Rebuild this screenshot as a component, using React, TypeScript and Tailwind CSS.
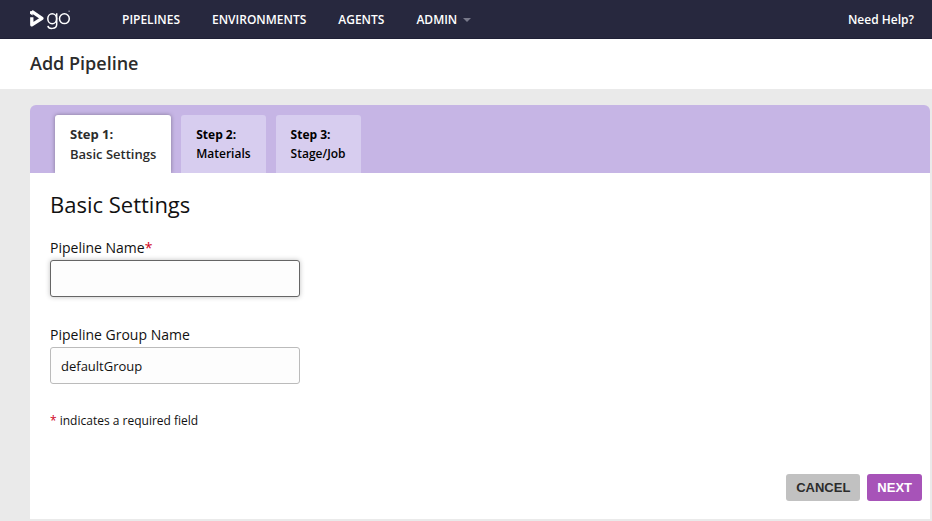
const navLinks = ['PIPELINES', 'ENVIRONMENTS', 'AGENTS'];

const steps = [
  { title: 'Step 1:', name: 'Basic Settings', active: true },
  { title: 'Step 2:', name: 'Materials', active: false },
  { title: 'Step 3:', name: 'Stage/Job', active: false },
];

function Logo() {
  return (
    <svg viewBox="0 0 42 22" className="h-[22px] w-[42px]" fill="none" aria-label="go" role="img">
      <path
        d="M1.7 2.3L12 9.3L1.8 15.8V8.2"
        stroke="#fff"
        strokeWidth="3.3"
        strokeLinejoin="round"
      />
      <path d="M0 2.2V4.8L2.6 6.4V2z" fill="#fff" />
      <g stroke="#fff" strokeWidth="1.5">
        <ellipse cx="22.2" cy="9.7" rx="4.4" ry="5" />
        <path d="M26.7 4.2V15.2C26.7 20.4 18.6 20.6 17.9 16.8" />
        <circle cx="34.4" cy="9.7" r="4.9" />
      </g>
      <path d="M38.4 2.2h1.5" stroke="#b5b5c0" />
    </svg>
  );
}

function Header() {
  return (
    <header className="flex h-[39px] items-center bg-[#27283e] pl-[30px] pr-[18px] text-xs font-semibold text-white shadow-[inset_0_-1px_0_#1f2036]">
      <a href="#home">
        <Logo />
      </a>
      <nav className="ml-[50px] flex flex-1 items-center gap-8">
        {navLinks.map((label) => (
          <a key={label} href={`#${label.toLowerCase()}`}>
            {label}
          </a>
        ))}
        <button type="button" className="flex items-center gap-[6px]">
          ADMIN
          <svg viewBox="0 0 8 4" className="h-1 w-2" fill="#78798a" aria-hidden="true">
            <path d="M0 0h8L4 4z" />
          </svg>
        </button>
      </nav>
      <a href="#help">Need Help?</a>
    </header>
  );
}

function StepTabs() {
  return (
    <ol className="flex h-[68px] gap-[10px] overflow-hidden rounded-t-md bg-[#c6b5e5] pl-[25px] pt-[10px]">
      {steps.map((step) => (
        <li
          key={step.title}
          className={
            step.active
              ? 'rounded-t-[3px] bg-white px-[15px] pt-[9px] text-[13px] leading-5 text-[#2c2c2c] shadow-[0_0_4px_rgba(0,0,0,0.35)]'
              : 'rounded-t-[3px] bg-[#d7cdef] px-[15px] pt-[10px] text-xs leading-[19px] text-black'
          }
        >
          <div className="font-bold">{step.title}</div>
          <div className="font-semibold">{step.name}</div>
        </li>
      ))}
    </ol>
  );
}

export default function App() {
  return (
    <div className="min-h-screen bg-[#eaeaea] font-['Open_Sans',sans-serif] text-[#111]">
      <Header />
      <div className="flex h-[50px] items-center bg-white px-[30px] pb-[2px]">
        <h1 className="text-lg font-semibold text-[#2c2c2c]">Add Pipeline</h1>
      </div>
      <main className="ml-[30px] mr-[2px] pb-[2px] pt-4">
        <StepTabs />
        <form className="bg-white px-5 pb-[18px] pt-[15px] text-sm">
          <h2 className="text-[22px] leading-8">Basic Settings</h2>
          <div className="mt-[17px] flex w-[250px] flex-col gap-[2px]">
            <label htmlFor="name" className="leading-[21px]">
              Pipeline Name<span className="text-[#d0021b]">*</span>
            </label>
            <input
              id="name"
              type="text"
              className="h-[37px] rounded-[3px] border border-[#666] bg-[#fdfdfd] px-[10px] text-[13px] shadow-[0_0_5px_rgba(0,0,0,0.25)] outline-none"
            />
          </div>
          <div className="mt-[27px] flex w-[250px] flex-col gap-[2px]">
            <label htmlFor="group" className="leading-[21px]">
              Pipeline Group Name
            </label>
            <input
              id="group"
              type="text"
              defaultValue="defaultGroup"
              className="h-[37px] rounded-[3px] border border-[#bbb] bg-[#fdfdfd] px-[10px] text-[13px] outline-none"
            />
          </div>
          <p className="mt-7 text-xs leading-[18px]">
            <span className="text-[#d0021b]">*</span> indicates a required field
          </p>
          <div className="-mr-3 mt-11 flex justify-end gap-[7px] font-['Liberation_Sans',sans-serif] text-[13px] font-bold leading-[27px]">
            <button type="button" className="rounded-[3px] bg-[#c1c1c1] px-[10px] text-[#2c2c2c]">
              CANCEL
            </button>
            <button type="submit" className="rounded-[3px] bg-[#a753b8] px-[10px] text-white">
              NEXT
            </button>
          </div>
        </form>
      </main>
    </div>
  );
}
